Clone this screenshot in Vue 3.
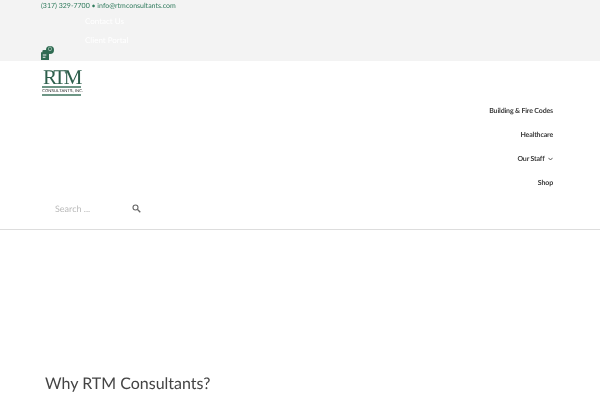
<script setup>
const navItems = [
  { label: 'Building & Fire Codes' },
  { label: 'Healthcare' },
  { label: 'Our Staff', caret: true },
  { label: 'Shop' },
]
</script>

<template>
  <div class="page">
    <header class="topbar">
      <div class="contact">(317) 329-7700 • info@rtmconsultants.com</div>
      <ul class="toplinks">
        <li>Contact Us</li>
        <li>Client Portal</li>
      </ul>
      <div class="cart">
        <svg width="8" height="10" viewBox="0 0 9 11">
          <path d="M0 2.5h1.500V1.500A1.500 1.500 0 0 1 3 0h3a1.500 1.500 0 0 1 1.500 1.500V2.500H9V11H0z" fill="#2f6b52" />
          <path d="M2 5h4v1H2zM2 7.500h3v1H2z" fill="#f3f3f3" />
        </svg>
        <span class="badge">0</span>
      </div>
    </header>

    <div class="logo">
      <div class="logo-rtm">RTM</div>
      <div class="logo-rule"></div>
      <div class="logo-sub">CONSULTANTS, INC.</div>
      <div class="logo-rule logo-rule-bottom"></div>
    </div>

    <nav class="nav">
      <a v-for="item in navItems" :key="item.label" class="nav-item">
        {{ item.label }}
        <svg v-if="item.caret" class="caret" width="5" height="4" viewBox="0 0 5 4">
          <path d="M.4.800 2.500 3 4.600.800" fill="none" stroke="#333" stroke-width=".8" />
        </svg>
      </a>
    </nav>

    <div class="search">
      <span class="search-text">Search ...</span>
      <svg class="search-icon" width="9" height="9" viewBox="0 0 9 9">
        <circle cx="3.500" cy="3.500" r="2.500" fill="none" stroke="#666" stroke-width="1.100" />
        <path d="M5.500 5.500 8.300 8.300" stroke="#666" stroke-width="1.300" />
      </svg>
    </div>

    <main class="main">
      <h2>Why RTM Consultants?</h2>
    </main>
  </div>
</template>

<style>
html, body { margin: 0; background: #fff; overflow: hidden; }
</style>

<style scoped>
.page {
  width: 600px;
  height: 400px;
  overflow: hidden;
  font-family: "Lato", "Liberation Sans", sans-serif;
  color: #333;
  text-rendering: geometricPrecision;
  will-change: transform;
}
.topbar {
  height: 61px;
  box-sizing: border-box;
  background: #f3f3f3;
  padding: 1px 0 0 41px;
  position: relative;
}
.contact {
  font-size: 7px;
  line-height: 11px;
  white-space: nowrap;
  color: #2f7a5c;
}
.toplinks {
  list-style: none;
  margin: 0 0 0 44px;
  padding: 0;
  color: #fff;
  font-size: 8px;
  line-height: 19px;
}
.cart {
  position: absolute;
  left: 41px;
  top: 46px;
  width: 14px;
  height: 14px;
}
.cart svg { position: absolute; left: 0; top: 4px; }
.badge {
  position: absolute;
  left: 5px;
  top: 0;
  width: 8px;
  height: 8px;
  border-radius: 50%;
  background: #2f6b52;
  color: #cfe3d9;
  font-size: 6px;
  line-height: 8px;
  text-align: center;
}
.logo {
  width: 39px;
  margin: 8px 0 0 42px;
  display: flex;
  flex-direction: column;
}
.logo-rtm {
  font-family: "Liberation Serif", serif;
  font-size: 21px;
  line-height: 16px;
  height: 16px;
  color: #2d5f4c;
  letter-spacing: -2.400px;
  white-space: nowrap;
  text-align: center;
}
.logo-rule { height: 2px; background: #6d9685; margin-top: 1px; }
.logo-sub {
  font-family: "Liberation Sans", sans-serif;
  font-size: 4.200px;
  line-height: 6px;
  color: #222;
  white-space: nowrap;
  text-align: center;
}
.logo-rule-bottom { margin-top: 0; }
.nav {
  margin-top: 9px;
  padding-right: 47px;
  display: flex;
  flex-direction: column;
  align-items: flex-end;
  gap: 12px;
}
.nav-item {
  height: 12px;
  line-height: 12px;
  font-size: 7px;
  font-weight: 700;
  letter-spacing: -.15px;
  color: #3a3a3a;
  white-space: nowrap;
}
.caret { margin-left: 2px; }
.search {
  height: 38px;
  padding: 0 0 2px 55px;
  display: flex;
  align-items: center;
  border-bottom: 1px solid #ddd;
}
.search-text { width: 77px; font-size: 9px; color: #bbb; }
.search-icon { display: block; }
.main { padding: 143px 0 0 45px; }
h2 {
  margin: 0;
  font-size: 16px;
  line-height: 22px;
  font-weight: 400;
  color: #444;
}
</style>
